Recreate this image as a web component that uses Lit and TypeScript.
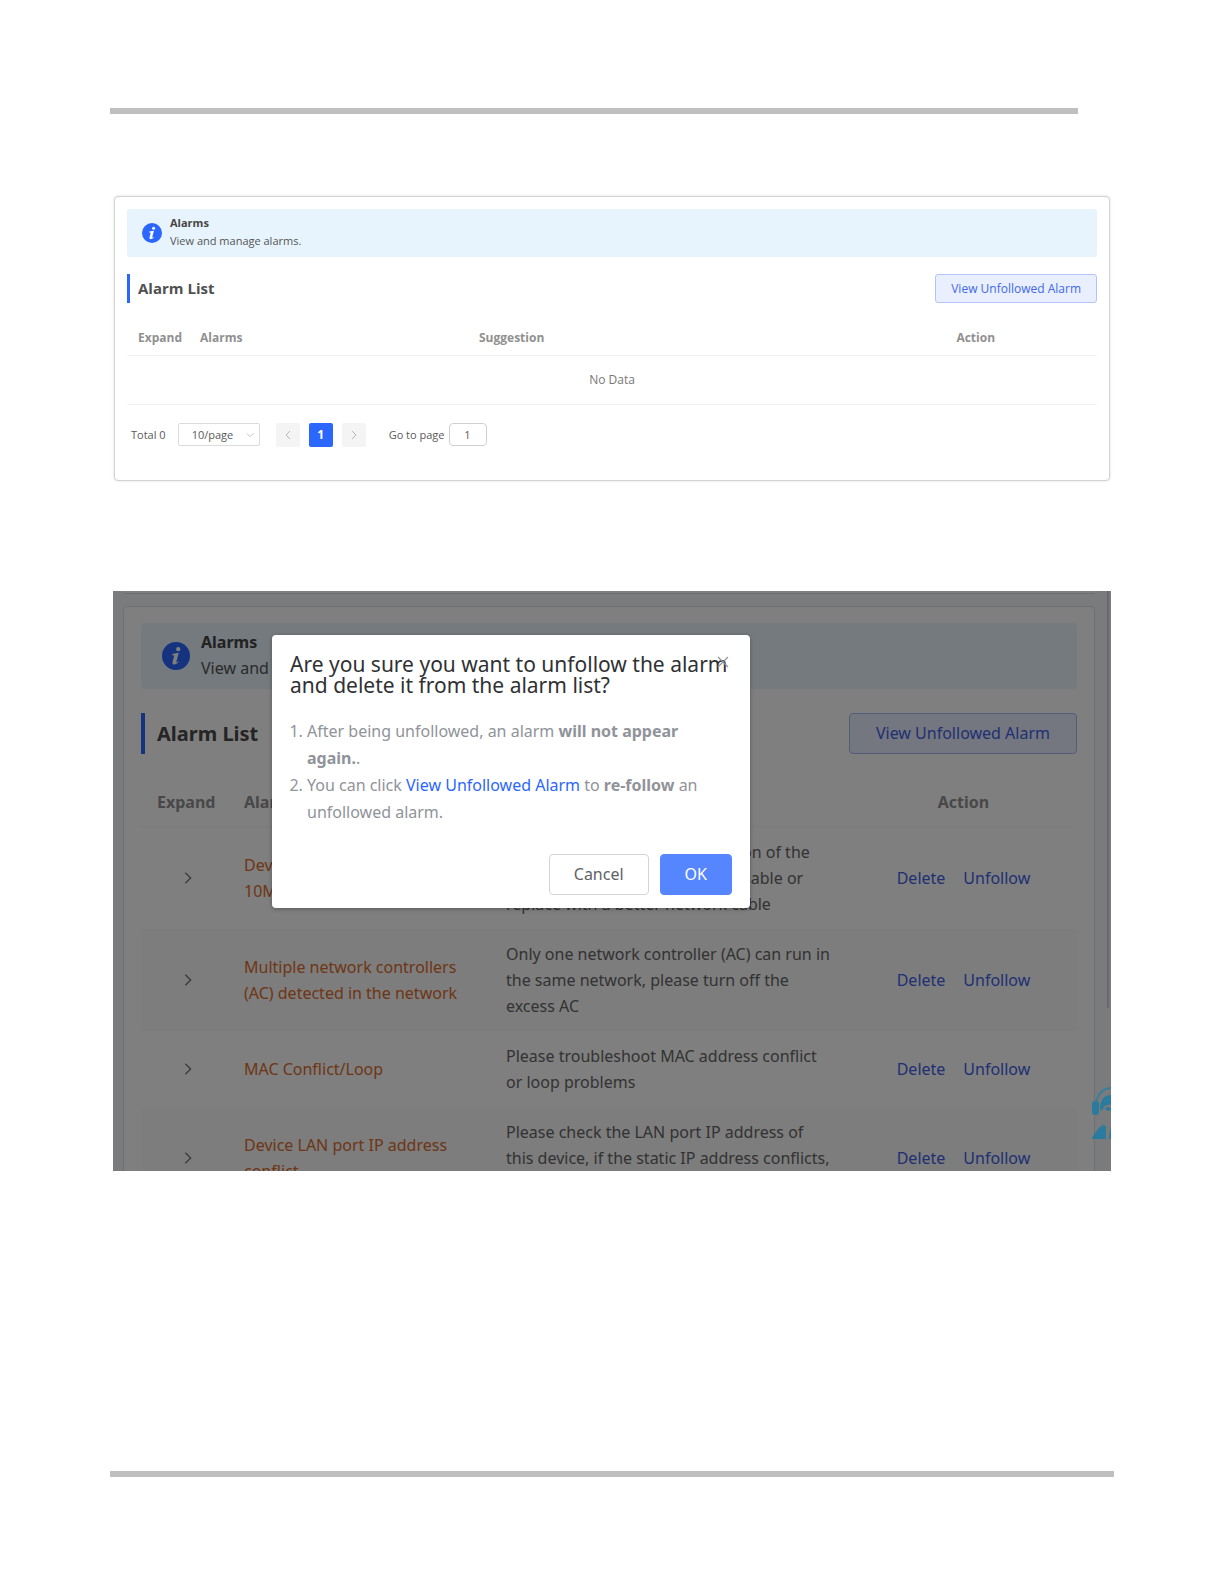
import { LitElement, html, css } from "lit";
import { customElement, property } from "lit/decorators.js";

interface Alarm {
  name: string[];
  suggestion: string[];
}

const ALARMS: Alarm[] = [
  {
    name: ["Device port speed is only", "10M"],
    suggestion: ["Please check the cable connection of the", "device, and replug the network cable or", "replace with a better network cable"],
  },
  {
    name: ["Multiple network controllers", "(AC) detected in the network"],
    suggestion: ["Only one network controller (AC) can run in", "the same network, please turn off the", "excess AC"],
  },
  {
    name: ["MAC Conflict/Loop"],
    suggestion: ["Please troubleshoot MAC address conflict", "or loop problems"],
  },
  {
    name: ["Device LAN port IP address", "conflict"],
    suggestion: ["Please check the LAN port IP address of", "this device, if the static IP address conflicts,", "please change it"],
  },
];

const lines = (parts: string[]) => parts.map((p, i) => (i ? html`<br />${p}` : html`${p}`));

const chevron = (dir: "left" | "right" | "down") => {
  const d = { left: "M8 2 4 6l4 4", right: "M4 2l4 4-4 4", down: "M2 4l4 4 4-4" }[dir];
  return html`<svg class="chev" viewBox="0 0 12 12" aria-hidden="true">
    <path d=${d} fill="none" stroke="currentColor" stroke-width="1" />
  </svg>`;
};

const base = css`
  * { box-sizing: border-box; }
  button, input, select { font: inherit; color: inherit; margin: 0; padding: 0; }
  button { cursor: pointer; white-space: nowrap; }
  a { color: #2b66ff; text-decoration: none; }
  h2, h3, p, ol { margin: 0; }
  table { width: 100%; border-collapse: collapse; table-layout: fixed; }
  th { text-align: left; font-weight: 700; color: #909090; }
  .chev { width: 12px; height: 12px; display: block; }
`;

@customElement("info-banner")
export class InfoBanner extends LitElement {
  @property({ type: Boolean, reflect: true }) large = false;

  static styles = [
    base,
    css`
      :host { display: block; }
      .banner {
        display: flex; align-items: center; gap: 8px; height: 48px; padding: 0 15px;
        background: #e8f4fd; border-radius: 2px; color: #555; font-size: 11px; line-height: 18px;
      }
      .icon { width: 20px; height: 20px; flex: none; }
      .text { padding-bottom: 2px; }
      .title { font-weight: 700; color: #444; }
      :host([large]) .banner {
        height: 66px; gap: 11px; padding: 0 21px; border-radius: 4px; font-size: 16px; line-height: 26px;
      }
      :host([large]) .icon { width: 28px; height: 28px; }
    `,
  ];

  render() {
    return html`<div class="banner">
      <svg class="icon" viewBox="0 0 28 28" aria-hidden="true">
        <circle cx="14" cy="14" r="14" fill="#2b66ff" />
        <circle cx="16.200" cy="7.200" r="2.100" fill="#fff" />
        <path d="M10.200 12l6.600-1.200-2.500 8.900c-.2.9.3 1 1.900-.5l.5.6c-1.900 2.200-3.700 3.100-5.100 2.700-1.300-.4-1.300-1.600-1-2.700l1.500-5.700c.2-.8-.4-1-1.900-.9z" fill="#fff" />
      </svg>
      <div class="text">
        <p class="title">Alarms</p>
        <p>View and manage alarms.</p>
      </div>
    </div>`;
  }
}

@customElement("empty-alarm-card")
export class EmptyAlarmCard extends LitElement {
  static styles = [
    base,
    css`
      :host { display: block; }
      .card {
        margin: 0 1px; padding: 12px 12px 33px; border: 1px solid #d2d2d2; border-radius: 4px;
        box-shadow: 0 0 3px rgba(0, 0, 0, 0.12); color: #5a5a5a; font-size: 12px; background: #fff;
      }
      .head { display: flex; align-items: center; justify-content: space-between; margin-top: 17px; }
      h2 { border-left: 3px solid #2b66ff; padding-left: 8px; font-size: 15px; line-height: 29px; color: #505050; }
      .view {
        height: 29px; padding: 0 15px; border: 1px solid #b4c4fb; border-radius: 3px;
        background: #e9effe; color: #3f68ea;
      }
      table { margin-top: 17px; color: #777; }
      th { height: 35px; padding: 0 0 0 11px; border-bottom: 1px solid #f3f3f3; }
      td { height: 49px; padding: 0; text-align: center; border-bottom: 1px solid #f3f3f3; }
      .c1 { width: 62px; }
      .c2 { width: 279px; }
      .c4 { width: 25%; }
      th.center { text-align: center; padding: 0; }
      .pager { display: flex; align-items: center; height: 24px; margin-top: 18px; padding-left: 4px; font-size: 11px; }
      .size { position: relative; width: 82px; margin-left: 12px; }
      .size select {
        display: block; width: 100%; height: 23px; padding-left: 13px; appearance: none; background: #fff;
        border: 1px solid #dcdcdc; border-radius: 2px;
      }
      .size .chev { position: absolute; right: 5px; top: 7px; width: 10px; height: 10px; color: #bbb; pointer-events: none; }
      .page {
        display: grid; place-items: center; width: 24px; height: 24px; border: 0; border-radius: 2px;
        background: #f4f4f5; color: #b5b5b5;
      }
      .pages { display: flex; gap: 9px; margin-left: 16px; }
      .page.on { background: #2b66ff; color: #fff; font-size: 12px; font-weight: 700; }
      .goto { display: flex; align-items: center; gap: 4px; margin-left: 23px; }
      .goto input {
        width: 38px; height: 23px; border: 1px solid #d0d0d0; border-radius: 4px; text-align: center; background: #fff;
      }
    `,
  ];

  render() {
    return html`<section class="card">
      <info-banner></info-banner>
      <div class="head">
        <h2>Alarm List</h2>
        <button class="view">View Unfollowed Alarm</button>
      </div>
      <table>
        <colgroup><col class="c1" /><col class="c2" /><col /><col class="c4" /></colgroup>
        <thead>
          <tr><th>Expand</th><th>Alarms</th><th>Suggestion</th><th class="center">Action</th></tr>
        </thead>
        <tbody><tr><td colspan="4">No Data</td></tr></tbody>
      </table>
      <div class="pager">
        <span>Total 0</span>
        <div class="size">
          <select aria-label="Rows per page"><option>10/page</option></select>
          ${chevron("down")}
        </div>
        <div class="pages">
          <button class="page" aria-label="Previous page">${chevron("left")}</button>
          <button class="page on">1</button>
          <button class="page" aria-label="Next page">${chevron("right")}</button>
        </div>
        <div class="goto">
          <label for="goto">Go to page</label>
          <input id="goto" type="text" value="1" />
        </div>
      </div>
    </section>`;
  }
}

@customElement("alarm-screen")
export class AlarmScreen extends LitElement {
  static styles = [
    base,
    css`
      :host { display: block; font-family: "Noto Sans", "Open Sans", sans-serif; }
      .screen {
        position: relative; overflow: hidden; aspect-ratio: 998 / 580; background: #f3f6f8;
        color: #666; font-size: 16px; line-height: 26px;
      }
      .previous { height: 3px; margin: 0 16px 0 11px; background: #fff; border-bottom: 1px solid #dcdcdc; }
      .card {
        margin: 12px 16px 0 10px; padding: 16px 17px; background: #fff;
        border: 1px solid #dcdfe6; border-radius: 4px;
      }
      .head { display: flex; align-items: center; justify-content: space-between; margin-top: 24px; }
      h2 { border-left: 4px solid #2b66ff; padding-left: 12px; font-size: 20px; line-height: 41px; color: #4a4a4a; }
      .view {
        height: 41px; padding: 0 26px; border: 1px solid #aab6f5; border-radius: 4px;
        background: #e9effe; color: #3f60e6;
      }
      table { margin-top: 24px; }
      th { height: 49px; padding: 0 16px; border-bottom: 1px solid #f6f6f6; }
      td { padding: 12px 0 12px 16px; vertical-align: middle; white-space: nowrap; }
      tbody tr:nth-child(even) { background: #fafafa; }
      .c1 { width: 87px; }
      .c2 { width: 262px; }
      .c4 { width: 227px; }
      th.center { text-align: center; padding: 0; }
      .expand { display: block; border: 0; background: none; margin: 0 auto; color: #777; }
      .expand .chev { width: 16px; height: 16px; }
      td.toggle { padding: 0 0 0 6px; }
      .name { color: #dc6c2c; }
      .actions { display: flex; justify-content: center; gap: 18px; }
      .actions a { color: #3f60e6; }
      td.ops { padding: 0; }
      .rail { position: absolute; right: 2px; top: 0; width: 2px; height: 417px; background: #d0d2d8; }
      .mask { position: absolute; inset: 0; background: rgba(0, 0, 0, 0.5); }
      .help { position: absolute; right: 0; top: 496px; width: 19px; height: 54px; }
      .dialog {
        position: absolute; left: 159px; top: 44px; width: 478px; padding: 19px 18px 13px;
        background: #fff; border-radius: 4px; box-shadow: 0 1px 4px rgba(0, 0, 0, 0.3);
      }
      h3 { font-size: 21px; line-height: 21px; font-weight: 400; color: #303133; white-space: nowrap; }
      .close {
        position: absolute; right: 20px; top: 20px; width: 14px; height: 14px; border: 0; background: none; color: #909399;
      }
      .close svg { display: block; width: 14px; height: 14px; }
      ol { margin-top: 22px; padding-left: 17px; color: #909399; line-height: 27px; white-space: nowrap; }
      .buttons { display: flex; justify-content: flex-end; gap: 11px; margin-top: 28px; }
      .btn { height: 41px; padding: 0 24px; border: 1px solid #d4d4d4; border-radius: 4px; background: #fff; color: #606266; }
      .btn.ok { border-color: #5585ff; background: #5585ff; color: #fff; }
    `,
  ];

  render() {
    return html`<section class="screen">
      <div class="previous"></div>
      <div class="card">
        <info-banner large></info-banner>
        <div class="head">
          <h2>Alarm List</h2>
          <button class="view">View Unfollowed Alarm</button>
        </div>
        <table>
          <colgroup><col class="c1" /><col class="c2" /><col /><col class="c4" /></colgroup>
          <thead>
            <tr><th>Expand</th><th>Alarms</th><th>Suggestion</th><th class="center">Action</th></tr>
          </thead>
          <tbody>
            ${ALARMS.map(
              (a) => html`<tr>
                <td class="toggle"><button class="expand" aria-label="Expand">${chevron("right")}</button></td>
                <td class="name">${lines(a.name)}</td>
                <td>${lines(a.suggestion)}</td>
                <td class="ops"><div class="actions"><a href="#">Delete</a><a href="#">Unfollow</a></div></td>
              </tr>`
            )}
          </tbody>
        </table>
      </div>
      <div class="rail"></div>
      <div class="mask"></div>
      <svg class="help" viewBox="0 0 19 54" aria-hidden="true">
        <path d="M4 17C5 8 10 2 19 1" fill="none" stroke="#37809c" stroke-width="2" />
        <rect x="0" y="14" width="7" height="14" rx="3" fill="#2a7b9e" />
        <path d="M8 22C8 13 12 8 19 8V18C14 17 11 20 10 24z" fill="#2a7b9e" />
        <path d="M13 22l2-2 4 1v2l-3 1z" fill="#2a7b9e" />
        <path d="M0 52c0-3 7-12 11-14q3 0 3 3v11z" fill="#2a7b9e" />
        <path d="M18 42h1v10h-2z" fill="#2a7b9e" />
      </svg>
      <div class="dialog" role="dialog" aria-labelledby="dialog-title">
        <h3 id="dialog-title">Are you sure you want to unfollow the alarm<br />and delete it from the alarm list?</h3>
        <button class="close" aria-label="Close">
          <svg viewBox="0 0 14 14" aria-hidden="true"><path d="M2 2l10 10M12 2 2 12" stroke="currentColor" stroke-width="1.200" /></svg>
        </button>
        <ol>
          <li>After being unfollowed, an alarm <b>will not appear<br />again.</b>.</li>
          <li>You can click <a href="#">View Unfollowed Alarm</a> to <b>re-follow</b> an<br />unfollowed alarm.</li>
        </ol>
        <div class="buttons">
          <button class="btn">Cancel</button>
          <button class="btn ok">OK</button>
        </div>
      </div>
    </section>`;
  }
}

@customElement("app-root")
export class AppRoot extends LitElement {
  static styles = css`
    :host {
      display: flex; flex-direction: column; box-sizing: border-box; min-height: 100vh;
      padding: 108px 110px 107px; background: #fff; font-family: "Open Sans", "Noto Sans", sans-serif;
    }
    .rule { height: 6px; background: #bfbfbf; }
    .top { margin-right: 36px; }
    .bottom { margin-top: auto; }
    .figures { display: grid; gap: 110px; margin: 82px 3px 40px; }
  `;

  render() {
    return html`
      <div class="rule top"></div>
      <main class="figures">
        <empty-alarm-card></empty-alarm-card>
        <alarm-screen></alarm-screen>
      </main>
      <div class="rule bottom"></div>
    `;
  }
}
